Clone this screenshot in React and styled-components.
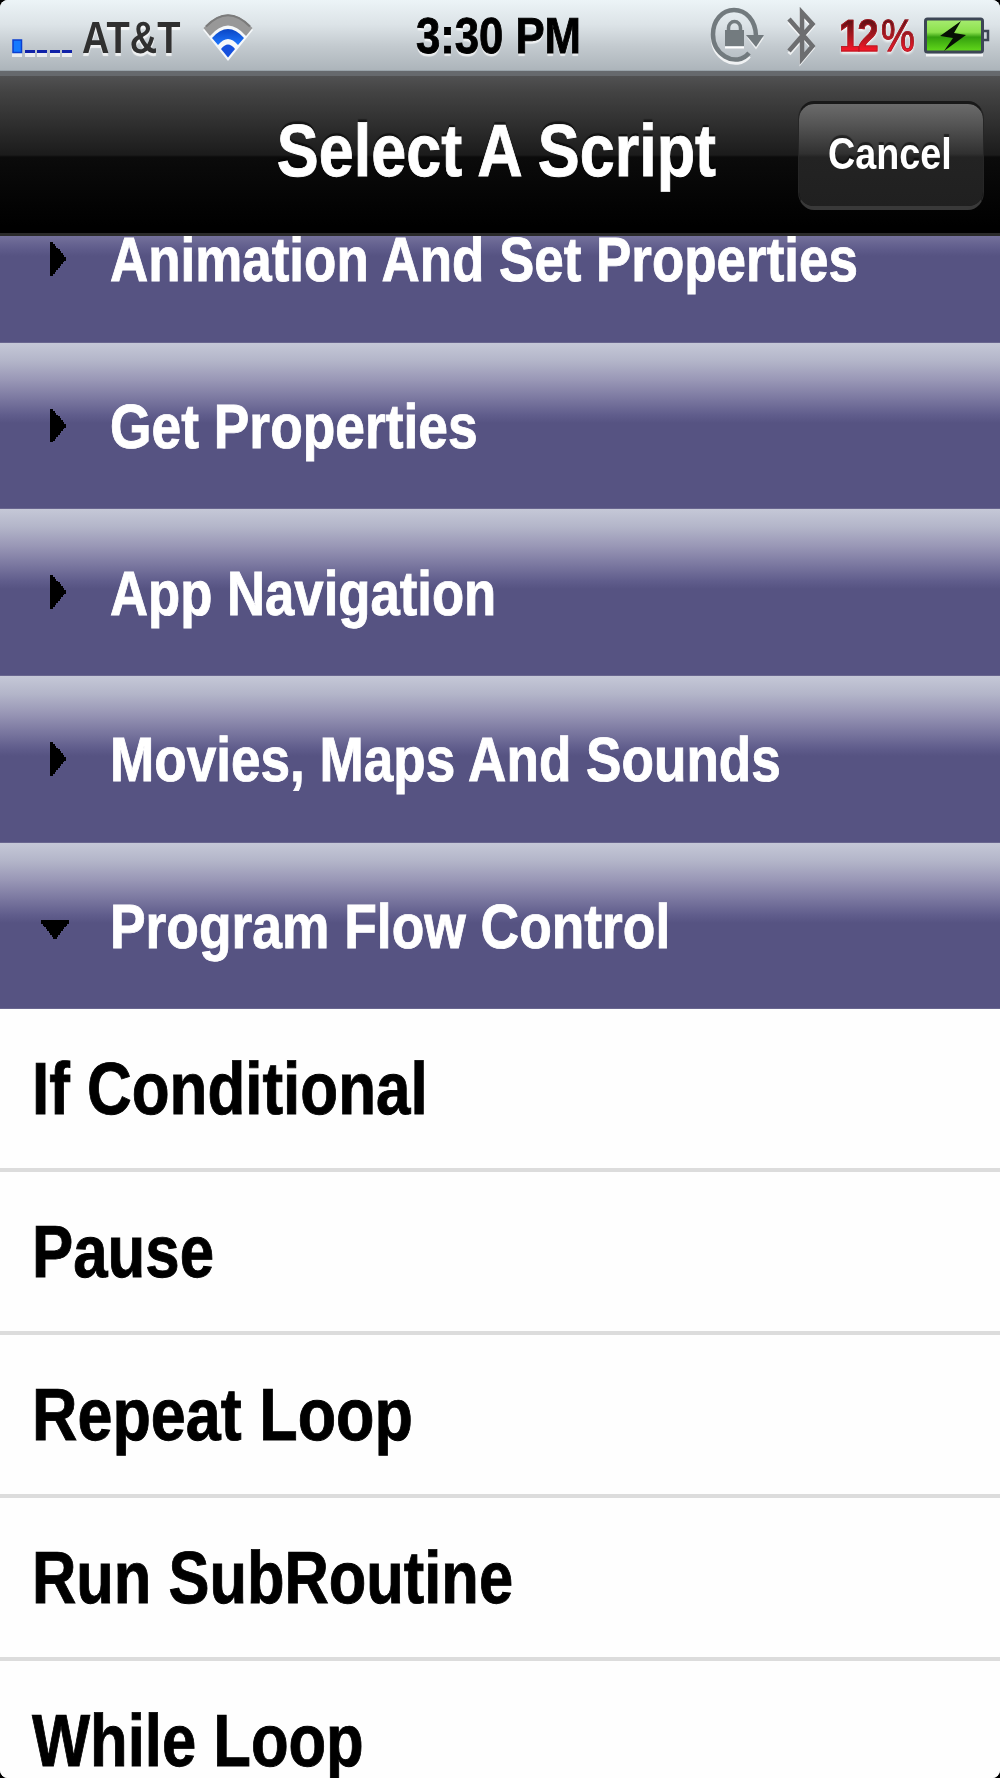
import React from "react"

import styled, { createGlobalStyle } from "styled-components"

const GlobalStyle = createGlobalStyle`
  html,
  body {
    margin: 0;
    background: #000;
  }

  * {
    box-sizing: border-box;
  }
`

const Phone = styled.main`
  width: 1000px;
  height: 1778px;
  display: flex;
  flex-direction: column;
  overflow: hidden;
  background: #fefefe;
  border-radius: 8px;
  font-family: "Liberation Sans", Arial, sans-serif;
  font-weight: 700;
  text-rendering: geometricPrecision;
`

/* condensed lettering, squeezed horizontally from its anchor side */
const Squeezed = styled.span`
  display: block;
  white-space: nowrap;
  line-height: 1.2;
  font-size: ${({ $size }) => $size}px;
  transform: scaleX(${({ $scale }) => $scale || 0.844});
  transform-origin: ${({ $from }) => $from || "left"} center;
  -webkit-text-stroke: ${({ $heavy }) => ($heavy ? "0.9px currentColor" : "0")};
`

const StatusBar = styled.header`
  flex: none;
  height: 71px;
  display: grid;
  grid-template-columns: 408px 180px 1fr;
  background: linear-gradient(#ecf4f7 0%, #dce3e7 35%, #c3cacf 65%, #adb5bb 98%, #8f9aa1 100%);
`

const StatusLeft = styled.div`
  display: flex;
  align-items: flex-start;
  padding-left: 12px;

  .bars {
    margin-top: 38px;
  }

  .carrier {
    width: 102px;
    margin: 11px 0 0 9px;
    color: #303030;
    text-shadow: 0 3px 1px rgba(255, 255, 255, 0.75);
  }

  .wifi {
    margin: 10px 0 0 17px;
  }
`

const Clock = styled.div`
  display: flex;
  justify-content: center;
  padding-top: 6px;
  color: #000;
  text-shadow: 0 3px 1px rgba(255, 255, 255, 0.7);
`

const StatusRight = styled.div`
  display: flex;
  align-items: flex-start;
  padding-left: 122px;

  .bluetooth {
    margin-left: 19px;
  }

  .battery {
    margin-top: 14px;
  }
`

const Charge = styled.div`
  display: flex;
  width: 85px;
  margin: 9px 0 0 22px;
  filter: drop-shadow(0 2px 1px rgba(255, 255, 255, 0.8));

  span {
    flex: none;
    width: max-content;
    color: transparent;
    background: linear-gradient(#5d1014 20%, #a81820 50%, #fb1627 78%);
    background-clip: text;
  }

  .number {
    width: 42px;
  }

  .number span {
    letter-spacing: -3px;
    padding-right: 3px;
    -webkit-text-stroke: 0.8px #b01822;
  }

  .percent span {
    font-weight: 400;
    -webkit-text-stroke: 1px #a8202a;
  }
`

const NavBar = styled.nav`
  flex: none;
  height: 165px;
  display: grid;
  grid-template-columns: 194px 604px 186px;
  border-top: 5px solid #66696d;
  border-bottom: 3px solid #2a2a2a;
  background: linear-gradient(#515152 0, #434343 16px, #1b1b1b 79px, #0b0b0b 81px, #000 150px);
`

const Title = styled.h1`
  display: flex;
  justify-content: center;
  margin: 0;
  padding-top: 31px;
  font-size: inherit;
  color: #fff;
  text-shadow: 0 -3px 1px rgba(0, 0, 0, 0.55);
`

const CancelButton = styled.button`
  width: 186px;
  height: 109px;
  margin-top: 25px;
  padding: 0 2px 2px 0;
  display: flex;
  align-items: center;
  justify-content: center;
  border: 1px solid #262626;
  border-radius: 16px / 18px;
  border-top: 3px solid #191919;
  border-bottom: 4px solid #393939;
  background: linear-gradient(#6b6b6b 0%, #555 20%, #303030 49%, #232323 52%, #202020 100%);
  background-clip: padding-box;
  color: #fff;
  font-family: inherit;
  font-weight: 700;
  text-shadow: 0 -3px 1px rgba(0, 0, 0, 0.5);
`

const ScriptList = styled.section`
  flex: 1;
  min-height: 0;
  overflow: hidden;

  .scrolled {
    margin-top: -60px;
  }
`

const SectionHeader = styled.div`
  height: 166.67px;
  display: grid;
  grid-template-columns: 109.8px 1fr;
  align-items: center;
  padding-top: 4px;
  color: #fff;
  border-bottom: 1px solid #69668f;
  background: linear-gradient(
    #c5c8d7 0,
    #b3b5c9 18px,
    #9997b6 37px,
    #7c79a1 55px,
    #605d8c 72px,
    #565382 80px
  );
`

const Chevron = styled.svg`
  display: block;
  margin-left: ${({ $open }) => ($open ? 41 : 50)}px;
  margin-top: ${({ $open }) => ($open ? 4 : -4)}px;
`

const ScriptRow = styled.div`
  height: 163px;
  display: flex;
  align-items: center;
  padding: 2px 0 0 32px;
  border-bottom: 4px solid #dcdcdc;
  background: #fefefe;
  color: #000;
`

const sections = [
    { title: "Animation And Set Properties", scale: 0.84 },
    { title: "Get Properties", scale: 0.847 },
    { title: "App Navigation", scale: 0.836 },
    { title: "Movies, Maps And Sounds", scale: 0.843 },
    {
        title: "Program Flow Control",
        scale: 0.847,
        open: true,
        scripts: [
            { name: "If Conditional", scale: 0.837 },
            { name: "Pause", scale: 0.835 },
            { name: "Repeat Loop", scale: 0.85 },
            { name: "Run SubRoutine", scale: 0.83 },
            { name: "While Loop", scale: 0.832 },
        ],
    },
]

const steps = [18, 18, 16, 14, 12, 10, 8, 6, 4, 2]

const Disclosure = ({ open }) => (
    <Chevron
        $open={open}
        width={open ? 28 : 16}
        height={open ? 18.5 : 33.5}
        viewBox={open ? "0 0 18 10" : "0 0 10 18"}
        preserveAspectRatio="none"
        shapeRendering="crispEdges"
    >
        {steps.map((size, i) =>
            open ? (
                <rect key={i} x={9 - size / 2} y={i} width={size} height="1" />
            ) : (
                <rect key={i} x={i} y={9 - size / 2} width="1" height={size} />
            )
        )}
    </Chevron>
)

const SignalBars = () => (
    <svg className="bars" width="61" height="20" viewBox="0 0 61 20">
        <path
            d="M0 17h10M13 17h10M25 17h10M38 17h10M50 17h10"
            stroke="#fff"
            strokeOpacity=".7"
            strokeWidth="4"
        />
        <rect x="1" y="2" width="8.5" height="12.5" fill="#1479ff" stroke="#0b3fd0" strokeWidth="1.5" />
        <path d="M13 13.5h10M25 13.5h10M38 13.5h10M50 13.5h10" stroke="#1022a8" strokeWidth="3" />
    </svg>
)

const Wifi = () => (
    <svg className="wifi" width="54" height="54" viewBox="0 0 54 54">
        <defs>
            <linearGradient id="wifi-blue" x1="0" y1="0" x2="0" y2="1">
                <stop offset="0" stopColor="#0a45c4" />
                <stop offset="1" stopColor="#1f78ff" />
            </linearGradient>
        </defs>
        <path d="M2 20Q27 -9 52 20L27 51Z" fill="#f5f8fa" />
        <path d="M2.5 18Q27 -9 51.5 18L45 26Q27 5 9 26Z" fill="#989898" />
        <path d="M5 16.500Q27 -6 49 16.500" fill="none" stroke="#7b7b7b" strokeWidth="2" />
        <path d="M11 28Q27 10 43 28L37 35Q27 23 17 35Z" fill="url(#wifi-blue)" />
        <path d="M20 39Q27 30 34 39L27 47.500Z" fill="#1550dd" />
    </svg>
)

const RotationLock = () => (
    <svg width="58" height="68" viewBox="0 0 58 68">
        <path
            d="M39 56C33 63.500 23 64.500 15 59.500C7 54.500 3 46.500 3 37.500"
            fill="none"
            stroke="#fff"
            strokeOpacity=".8"
            strokeWidth="4.500"
        />
        <path d="M37 37.500H54L46 49.500Z" fill="#fff" fillOpacity=".7" />
        <path
            d="M39 53C33 60.500 23 61.500 15 56.500C7 51.500 3 43.500 3 34.500C3 20.500 12 10 24 10C36 10 45.500 20 46 36"
            fill="none"
            stroke="#727a7e"
            strokeWidth="4.500"
        />
        <path d="M36 35H54L46 47Z" fill="#727a7e" />
        <rect x="15" y="30" width="19" height="16" fill="#737b7f" />
        <path d="M15 47.500h19" stroke="#fff" strokeWidth="2" />
        <path d="M18.500 31v-3a6 6.500 0 0 1 12 0v3" fill="none" stroke="#737b7f" strokeWidth="3.500" />
    </svg>
)

const Bluetooth = () => (
    <svg className="bluetooth" width="30" height="70" viewBox="0 0 30 70">
        <path
            d="M2 22L25.500 48L14.500 61V15L25.500 26L2 54"
            fill="none"
            stroke="#fff"
            strokeOpacity=".75"
            strokeWidth="4"
        />
        <path
            d="M2 19L25.500 46L15 58.500V12.500L25.500 24L2 51"
            fill="none"
            stroke="#6d6e70"
            strokeWidth="4.500"
        />
    </svg>
)

const Battery = () => (
    <svg className="battery" width="67" height="44" viewBox="0 0 67 44">
        <defs>
            <linearGradient id="battery-green" x1="0" y1="0" x2="0" y2="1">
                <stop offset="0" stopColor="#a8ec72" />
                <stop offset=".4" stopColor="#8be04c" />
                <stop offset=".55" stopColor="#349f0e" />
                <stop offset="1" stopColor="#65dc1c" />
            </linearGradient>
        </defs>
        <path d="M2 41H59" stroke="#fff" strokeOpacity=".8" strokeWidth="3" />
        <rect x="1.500" y="5" width="57" height="33" rx="2" fill="url(#battery-green)" stroke="#3d4655" strokeWidth="3" />
        <path d="M60 17h4v9h-4" fill="#cbd2da" stroke="#3d4655" strokeWidth="2.500" />
        <path d="M37 7L16 22L29 24L20 37L42 21L30 19Z" fill="#071005" />
    </svg>
)

const App = () => {
    return (
        <>
            <GlobalStyle />
            <Phone>
                <StatusBar>
                    <StatusLeft>
                        <SignalBars />
                        <div className="carrier">
                            <Squeezed $size={45}>AT&amp;T</Squeezed>
                        </div>
                        <Wifi />
                    </StatusLeft>
                    <Clock>
                        <Squeezed $heavy $size={50.5} $scale={0.865} $from="center">3:30 PM</Squeezed>
                    </Clock>
                    <StatusRight>
                        <RotationLock />
                        <Bluetooth />
                        <Charge>
                            <div className="number">
                                <Squeezed $size={45}>12</Squeezed>
                            </div>
                            <div className="percent">
                                <Squeezed $size={45}>%</Squeezed>
                            </div>
                        </Charge>
                        <Battery />
                    </StatusRight>
                </StatusBar>

                <NavBar>
                    <span />
                    <Title>
                        <Squeezed $heavy $size={74} $scale={0.85} $from="center">Select A Script</Squeezed>
                    </Title>
                    <CancelButton type="button">
                        <Squeezed $size={44.4} $scale={0.85} $from="center">Cancel</Squeezed>
                    </CancelButton>
                </NavBar>

                <ScriptList>
                    <div className="scrolled">
                        {sections.map(({ title, scale, open, scripts = [] }) => (
                            <React.Fragment key={title}>
                                <SectionHeader>
                                    <Disclosure open={open} />
                                    <Squeezed $heavy $size={62.5} $scale={scale * 1.008}>{title}</Squeezed>
                                </SectionHeader>
                                {scripts.map((script) => (
                                    <ScriptRow key={script.name}>
                                        <Squeezed $heavy $size={74} $scale={script.scale}>
                                            {script.name}
                                        </Squeezed>
                                    </ScriptRow>
                                ))}
                            </React.Fragment>
                        ))}
                    </div>
                </ScriptList>
            </Phone>
        </>
    )
}

export default App
